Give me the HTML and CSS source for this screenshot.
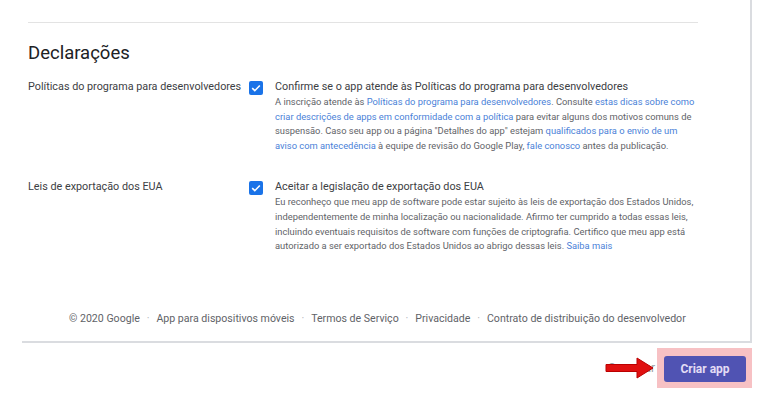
FILE: index.html
```
<!DOCTYPE html>
<html lang="pt-BR">
<head>
    <meta charset="UTF-8">
    <meta name="viewport" content="width=device-width, initial-scale=1.0">
    <title>Criar app</title>
    <link rel="stylesheet" href="styles.css">
</head>
<body>
    <div class="panel">
        <div class="content">
            <hr class="divider">
            <h2>Declarações</h2>

            <div class="row">
                <div class="row-label">Políticas do programa para desenvolvedores</div>
                <div class="check">
                    <svg viewBox="0 0 14 14" width="14" height="14"><rect width="14" height="14" rx="2" fill="#1a73e8"/><path d="M3.2 7.2l2.6 2.5 5-5.2" fill="none" stroke="#fff" stroke-width="1.6"/></svg>
                </div>
                <div class="row-body">
                    <div class="row-title">Confirme se o app atende às Políticas do programa para desenvolvedores</div>
                    <p class="desc">A inscrição atende às <a href="#">Políticas do programa para desenvolvedores</a>. Consulte <a href="#">estas dicas sobre como criar descrições de apps em conformidade com a política</a> para evitar alguns dos motivos comuns de suspensão. Caso seu app ou a página "Detalhes do app" estejam <a href="#">qualificados para o envio de um aviso com antecedência</a> à equipe de revisão do Google Play, <a href="#">fale conosco</a> antes da publicação.</p>
                </div>
            </div>

            <div class="row">
                <div class="row-label">Leis de exportação dos EUA</div>
                <div class="check">
                    <svg viewBox="0 0 14 14" width="14" height="14"><rect width="14" height="14" rx="2" fill="#1a73e8"/><path d="M3.2 7.2l2.6 2.5 5-5.2" fill="none" stroke="#fff" stroke-width="1.6"/></svg>
                </div>
                <div class="row-body">
                    <div class="row-title">Aceitar a legislação de exportação dos EUA</div>
                    <p class="desc">Eu reconheço que meu app de software pode estar sujeito às leis de exportação dos Estados Unidos, independentemente de minha localização ou nacionalidade. Afirmo ter cumprido a todas essas leis, incluindo eventuais requisitos de software com funções de criptografia. Certifico que meu app está autorizado a ser exportado dos Estados Unidos ao abrigo dessas leis. <a href="#">Saiba mais</a></p>
                </div>
            </div>

            <div class="footer">
                <span>© 2020 Google</span>
                <span class="dot">·</span>
                <span>App para dispositivos móveis</span>
                <span class="dot">·</span>
                <span>Termos de Serviço</span>
                <span class="dot">·</span>
                <span>Privacidade</span>
                <span class="dot">·</span>
                <span>Contrato de distribuição do desenvolvedor</span>
            </div>
        </div>
    </div>

    <div class="actions">
        <span class="cancel">Cancelar</span>
        <svg class="arrow" viewBox="0 0 50 24" width="50" height="24"><path d="M1 8.5h31V2l16 10-16 10v-6.5H1z" fill="#e01010" stroke="#b00" stroke-width="1"/></svg>
        <div class="highlight">
            <button class="primary">Criar app</button>
        </div>
    </div>
</body>
</html>
```

FILE: styles.css
```
body {
    margin: 0;
    font-family: Roboto, "Liberation Sans", sans-serif;
    color: #202124;
    background: #fff;
}
.panel {
    width: 728px;
    margin-left: 22px;
    padding-top: 22px;
    border-right: 2px solid #dadce0;
    border-bottom: 2px solid #dadce0;
    height: 319px;
}
.content {
    padding-left: 6px;
}
.divider {
    width: 670px;
    margin: 0;
    border: none;
    border-top: 1px solid #e3e3e3;
}
h2 {
    font-size: 18.5px;
    font-weight: 400;
    margin: 18px 0 0;
    line-height: 24px;
}
.row {
    display: flex;
    margin-top: 14px;
}
.row + .row {
    margin-top: 26px;
}
.row-label {
    width: 221px;
    font-size: 10.8px;
    line-height: 16px;
    color: #3c4043;
}
.check {
    width: 26px;
    padding-top: 1px;
}
.row-body {
    width: 425px;
}
.row-title {
    font-size: 10.8px;
    line-height: 16px;
    color: #3c4043;
}
.desc {
    margin: 0;
    font-size: 9.35px;
    line-height: 14.6px;
    color: #5f6368;
}
.desc a {
    color: #4a7fd8;
    text-decoration: none;
}
.footer {
    margin-top: 58px;
    padding-left: 41px;
    font-size: 10.6px;
    color: #5f6368;
    display: flex;
    gap: 6.9px;
}
.dot {
    color: #b0b3b8;
}
.actions {
    display: flex;
    align-items: center;
    justify-content: flex-end;
    padding-right: 16px;
    margin-top: 5px;
}
.cancel {
    font-size: 12px;
    color: #9aa0a6;
    margin-right: -50px;
}
.arrow {
    margin-right: 2px;
}
.highlight {
    background: #f7c1c4;
    padding: 8px 6px 6px 7px;
}
.primary {
    background: #5053b3;
    color: #e3dcf5;
    border: none;
    border-radius: 3px;
    font-family: Roboto, "Liberation Sans", sans-serif;
    font-weight: 700;
    font-size: 12px;
    width: 82px;
    height: 26px;
    padding: 0;
}
```
